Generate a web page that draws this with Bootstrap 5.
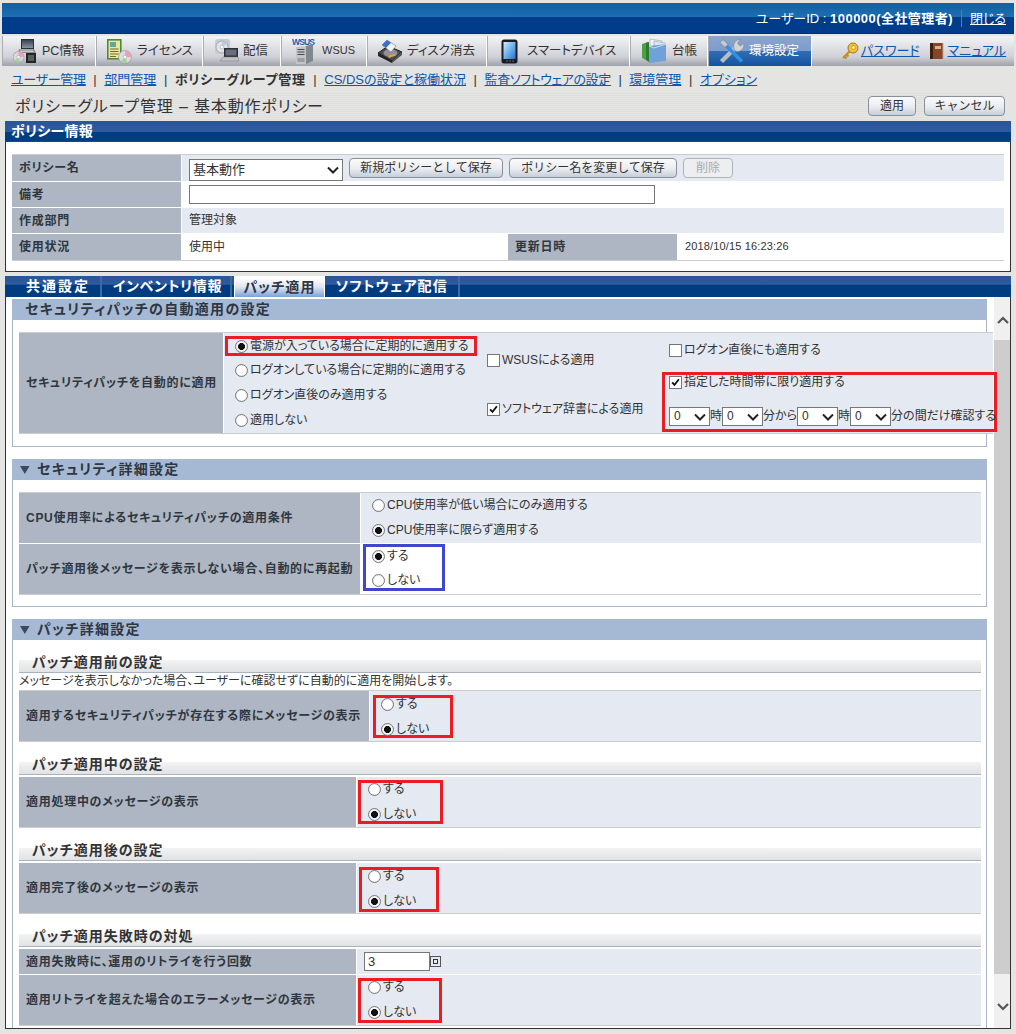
<!DOCTYPE html>
<html lang="ja">
<head>
<meta charset="utf-8">
<title>ポリシーグループ管理</title>
<link href="https://cdn.jsdelivr.net/npm/bootstrap@5.3.0/dist/css/bootstrap.min.css" rel="stylesheet">
<style>
html,body{margin:0;height:1034px;overflow:hidden}
body{width:1016px;background:#e4e4e2;color:#333;font-family:"Liberation Sans","Noto Sans CJK JP",sans-serif;font-size:12px;line-height:1.2;font-feature-settings:"palt"}
a{color:#0b57b0}
.top-bar{height:31px;margin:3px 2px 0;background:linear-gradient(#12609f 0,#1c6fb3 45%,#003c8a 46%,#003c8a 97%,#222 100%);color:#fff;font-size:13px;padding-right:8px}
.top-bar a{color:#fff}
.top-bar b{letter-spacing:.45px}
.top-sep{width:1px;height:17px;background:#4d7cb5;margin:0 8px}
.main-nav{height:30px;margin:2px 2px 0;background:linear-gradient(#f3f4f7 0,#dcdde2 45%,#cfd1d6 70%,#9da1aa 100%)}
.mtab{height:30px;border-right:1px solid #fff;border-left:1px solid #a9adb6;font-size:12.5px;color:#333;flex:none}
.mtab svg{flex:none}
.mtab.on{background:linear-gradient(#8aa5cf 0,#7d9ccb 50%,#2f6db4 51%,#14529f 100%);color:#fff}
.t1{width:94px;padding-left:10px;gap:5px}
.t2{width:107px;padding-left:10px;gap:5px}
.t3{width:78px;padding-left:11px;gap:4px}
.t4{width:86px;padding-left:10px;gap:6px}
.t4 span{font-size:11px}
.t5{width:120px;padding-left:10px;gap:5px}
.t6{width:143px;padding-left:13px;gap:9px}
.t7{width:78px;padding-left:11px;gap:5px}
.t8{width:104px;padding-left:9px;gap:4px}
.nav-links{font-size:13px;white-space:nowrap;padding-left:29px}
.nav-links svg{flex:none}
.lnk-a{margin-left:2px}
.ico-b{margin-left:9px}
.lnk-b{margin-left:4px}
.sub-nav{height:26px;padding:1px 0 0 11px;font-size:13px}
.sub-nav .pipe{margin:0 7.6px;color:#333}
.sub-nav b{letter-spacing:.75px}
.sub-nav .tight{letter-spacing:-.4px}
.sub-nav .tight-a{letter-spacing:-.3px}
.title-row{height:28px;margin:0 11px 0 15px;background:repeating-linear-gradient(#e6e6e4 0 1px,#dedede 1px 2px)}
.title-row h1{font-size:16px;font-weight:400;margin:2px 0 0;letter-spacing:.85px}
.old-btn{--bs-btn-padding-y:0;--bs-btn-padding-x:0;--bs-btn-font-size:12px;--bs-btn-border-radius:4px;--bs-btn-line-height:1;height:20px;border:1px solid #8a8f98;background:linear-gradient(#fbfbfc,#e9ecf0 55%,#c6ced9);color:#333;flex:none}
.old-btn:disabled{color:#aaa;background:#eceef1;border-color:#b0b3b8;opacity:1}
.wb48{width:48px}.wb81{width:81px}.wb154{width:154px;margin-left:6px}.wb168{width:168px;margin-left:6px}.wb50{width:50px;margin-left:6px}
.panel-head{height:21px;margin:1px 5px 0;background:linear-gradient(#2b5599 0,#2f5a9e 50%,#003d80 52%,#003d80 92%,#1a4f8f 100%);color:#fff;font-size:14px;font-weight:700;padding:2px 0 0 6px;letter-spacing:.3px}
.panel-box{height:130px;margin:0 5px;background:#fff;border:solid #333;border-width:0 1px 1px;padding:12px 6px 0 6px}
.frm-wrap{border-top:1px solid #ccc;border-bottom:1px solid #ccc}
.w992{width:992px}.w974{width:974px}.w962{width:962px}
.frm-row{display:flex;background:#e5e9f1;border-top:1px solid #fff;font-size:12px}
.frm-row:first-child{border-top:0}
.frm-row.blank{background:#fff}
.frm-lbl{flex:none;background:#adb6c2;font-weight:700;padding:1px 0 0 7px;display:flex;align-items:center;color:#2f3640;border-right:1px solid #fff;letter-spacing:.72px}
.frm-val{flex:1;display:flex;align-items:center;min-width:0;padding-left:7px}
.tall-25{height:25px}.tall-26{height:26px}.tall-27{height:27px}.tall-50{height:50px}.tall-51{height:51px}.tall-100{height:100px}
.w170{width:170px}.w169{width:169px;border-right:0}.w205{width:205px}.w342{width:342px}.w351{width:351px}.w338{width:338px}
.txt-in,.sel-in{border:1px solid #777;background:#fff;border-radius:0;padding:0 3px;font-size:12px;color:#333;height:19px}
.sel-in{appearance:none;-webkit-appearance:none;background:#fff url("data:image/svg+xml,%3Csvg xmlns='http://www.w3.org/2000/svg' viewBox='0 0 12 8'%3E%3Cpath d='M1 1.5l5 5 5-5' fill='none' stroke='%23222' stroke-width='2'/%3E%3C/svg%3E") no-repeat right 3px center/12px 8px}
.sel-name{width:154px;height:22px;margin-top:4px;font-size:13px}
.in-466{width:466px}
.in-66{width:66px;font-size:13px}
.tab-bar{height:21px;margin:4px 5px 0;background:linear-gradient(#2b5599 0,#2f5a9e 40%,#003d80 42%);color:#fff;font-size:14px;font-weight:700;letter-spacing:1.1px;padding-left:20px}
.stab{padding:0 10px 0 1px;height:100%;display:flex;align-items:center;border-right:2px solid #3a6aa8}
.stab.first{letter-spacing:2px}
.stab.inv{padding-left:11px;letter-spacing:.7px;padding-right:8px}
.stab.on{background:linear-gradient(#fff,#dfe7f2 45%,#7ca2d8);color:#2f3640;border:solid #fff;border-width:2px 1px 0;margin:0 2px;padding:0 8px}
.stab.sw{padding-left:9px}
.scroll-area{height:732px;margin:0 5px;background:#fff;border:solid #333;border-width:0 1px 1px;display:flex;overflow:hidden}
.pane{width:988px;flex:none;padding-top:2px;padding-left:6px;position:relative;z-index:1}
.scr{width:17px;flex:none;background:#f0f0f0;display:flex;flex-direction:column;align-items:center}
.scr-thumb{height:634px;width:100%;background:#cdcdcd;margin-left:-1px}
.arrow-up{height:43px;padding-top:15px}
.arrow-dn{height:54px;padding-top:25px}
.sec-bar{height:21px;width:975px;background:#a5b9d5;font-size:14px;font-weight:700;color:#2f3640;letter-spacing:1.3px;display:flex;align-items:center;padding-left:13px}
.sec-bar svg{margin:0 7px 0 -5px}
.sec-body{width:975px;border:solid #a9b5c9;border-width:0 1px 1px;padding:12px 5px 12px 6px;margin-bottom:12px}
.sec-b2{padding-bottom:11px}
.sec-b3{padding-bottom:0;margin-bottom:0;height:395px}
.opt{height:25px;display:flex;align-items:center;gap:2px}
.rdo,.chk{appearance:none;-webkit-appearance:none;margin:0;width:13px;height:13px;flex:none;background:#fff}
.rdo{border:1px solid #777;border-radius:50%;box-shadow:inset 0 0 0 1px #eee}
.rdo:checked{background:radial-gradient(circle,#111 0 3.2px,#fff 3.8px)}
.chk{border:1px solid #777}
.chk:checked{background:#fff url("data:image/svg+xml,%3Csvg xmlns='http://www.w3.org/2000/svg' viewBox='0 0 12 12'%3E%3Cpath d='M2.3 5.8l2.6 2.7 4.8-6' fill='none' stroke='%23111' stroke-width='2'/%3E%3C/svg%3E") no-repeat center/11px}
.anno-r,.anno-b{border:3px solid #ed1c24;flex:none}
.anno-b{border-color:#3f48cc;width:82px;height:47px;margin-left:2px;padding-left:6px}
.anno-main{height:20px;width:252px;margin:2px 0 2px 1px;padding-left:7px}
.anno-time{width:335px;height:60px;margin-top:14px;padding-left:4px}
.opt-18{height:18px}
.opt-25b{margin-top:3px}
.ra1{width:80px;height:43px;margin:4px 0 0 3px;padding-left:5px}
.ra2{width:85px;height:44px;margin:3px 0 0 1px;padding-left:7px}
.ra3{width:80px;height:45px;margin:4px 0 0 2px;padding-left:6px}
.ra4{width:84px;height:45px;margin:3px 0 0 1px;padding-left:7px}
.mini-opt{height:13px}
.mini-opt + .mini-opt{margin-top:12px}
.c1{width:263px;padding-top:1px}
.c2{width:182px;padding-top:20px}
.c3{width:325px;margin-left:-7px}
.chk-row{height:15px}
.chk-gap{margin-top:34px}
.chk-top{margin:10px 0 0 7px}
.opt-pad{padding-left:11px}
.sub-h{height:21px;font-size:14px;font-weight:700;letter-spacing:1px;padding:2px 0 0 13px;background:linear-gradient(#f3f3f3,#e0e2e5) left bottom/100% 12px no-repeat;border-bottom:1px solid #a9b3c0;color:#333}
.sub-gap{margin-top:12px}
.note-line{height:18px;display:flex;align-items:center;font-size:12px;border-bottom:1px solid #ccc}
.gap2{margin-top:2px}
.line-b{border-bottom:1px solid #ccc}
.stamp{font-size:11px;letter-spacing:.15px;padding-left:8px;width:327px}
.mini-box{display:inline-flex;align-items:center;justify-content:center;width:11px;height:11px;border:1px solid #555;line-height:1}
.mini-box::before{content:"";width:5px;height:5px;border:1px solid #333}
.times{gap:0;white-space:nowrap;height:19px;margin-top:17px}
.times .sel-in{width:41px;padding-left:4px;flex:none}
</style>
</head>
<body>
<div class="top-bar d-flex align-items-center justify-content-end">
  <span>ユーザーID : <b>100000(全社管理者)</b></span><span class="top-sep"></span><a href="#">閉じる</a>
</div>

<div class="main-nav d-flex align-items-center">
  <div class="mtab t1 d-flex align-items-center">
    <svg width="24" height="24" viewBox="0 0 24 24"><defs><linearGradient id="sc" x1="0" y1="0" x2="0" y2="1"><stop offset="0" stop-color="#3a4250"/><stop offset="1" stop-color="#8a93a3"/></linearGradient></defs><path d="M8 0h13v10H8z" fill="#2b2f38"/><path d="M9 1h11v8H9z" fill="url(#sc)"/><path d="M6 10h15l2 4H5z" fill="#8b8d92"/><path d="M7 11h13M6.500 12.500h14" stroke="#c7c9cc"/><circle cx="5.500" cy="18" r="5.500" fill="#d9d9dc" stroke="#8f8f95" stroke-width=".6"/><path d="M5.500 12.500a5.500 5.500 0 0 1 5.500 5.500h-5.500z" fill="#e9a1b6"/><path d="M5.500 18l-4 4a5.500 5.500 0 0 0 6 1z" fill="#a4d2a0"/><circle cx="5.500" cy="18" r="1.600" fill="#fff" stroke="#999" stroke-width=".5"/><rect x="13" y="14" width="10" height="10" fill="#23252a"/><rect x="15" y="16" width="6" height="6" fill="#596058"/></svg>
    <span>PC情報</span></div>
  <div class="mtab t2 d-flex align-items-center">
    <svg width="25" height="25" viewBox="0 0 25 25"><rect x=".8" y=".8" width="13" height="19" fill="#eee79a" stroke="#4a8a3a" stroke-width="1.6"/><rect x="3" y="3" width="6" height="5" fill="#5fa7a0"/><path d="M3 10h8.500M3 12.500h8.500M3 15h8.500M3 17.500h6" stroke="#6b6c3a"/><circle cx="18" cy="18" r="6.500" fill="#dcdce0" stroke="#8f8f95" stroke-width=".6"/><path d="M18 11.500a6.500 6.500 0 0 1 6.500 6.500H18z" fill="#e9a1b6"/><path d="M18 18l-4.500 4.700a6.500 6.500 0 0 0 7 .8z" fill="#a4d2a0"/><circle cx="18" cy="18" r="1.800" fill="#fff" stroke="#999" stroke-width=".5"/></svg>
    <span>ライセンス</span></div>
  <div class="mtab t3 d-flex align-items-center">
    <svg width="24" height="24" viewBox="0 0 24 24"><rect x="0" y="0" width="15" height="15" rx="3" fill="#c9cbd2"/><circle cx="7" cy="8" r="6" fill="#e2e2e8" stroke="#8f8f95" stroke-width=".6"/><path d="M7 2a6 6 0 0 1 5 3L7 8z" fill="#b6cfe2"/><circle cx="7" cy="8" r="1.800" fill="#fff" stroke="#999" stroke-width=".5"/><path d="M9 9h14v9H9z" fill="#2c2f36"/><path d="M10.500 10.500h11v6h-11z" fill="#686f7e"/><path d="M8 18h15l1 4H5z" fill="#bfc1c5" stroke="#777" stroke-width=".5"/></svg>
    <span>配信</span></div>
  <div class="mtab t4 d-flex align-items-center">
    <svg width="24" height="28" viewBox="0 0 24 28"><text x="0" y="7.500" font-size="8.500" font-weight="700" fill="#1f5fb0" font-family="Liberation Sans" textLength="23">WSUS</text><path d="M4 10l10-1v18H4z" fill="#c4c5c8"/><path d="M14 9l7-2v17l-7 3z" fill="#82868d"/><path d="M5.500 12.500h7M5.500 15h7M5.500 17.500h7" stroke="#46484d" stroke-width="1.200"/><path d="M5.500 21h7v4h-7z" fill="#9a9ca0"/></svg>
    <span>WSUS</span></div>
  <div class="mtab t5 d-flex align-items-center">
    <svg width="24" height="24" viewBox="0 0 24 24"><path d="M0 14L10 7l14 6-10 9z" fill="#4a4c50" stroke="#1a1a1a"/><path d="M0 14v3l14 7v-2z" fill="#222"/><path d="M14 24l10-8v-3l-10 9z" fill="#55565a"/><ellipse cx="12.500" cy="14" rx="7" ry="3.800" fill="#8f9196"/><path d="M4 6l5-5 9 6-5 6z" fill="#f2f2f2" stroke="#7a7a7a" stroke-width=".6"/><path d="M4 6l5-5 4 2.700-5 5.200z" fill="#3a6fc8"/><path d="M10 17l6-2 2 1-7 3z" fill="#e9a63a"/></svg>
    <span>ディスク消去</span></div>
  <div class="mtab t6 d-flex align-items-center">
    <svg width="17" height="25" viewBox="0 0 17 25"><defs><linearGradient id="tb" x1="0" y1="0" x2="1" y2="1"><stop offset="0" stop-color="#d5ecfb"/><stop offset=".5" stop-color="#6fb2ee"/><stop offset="1" stop-color="#2a6fca"/></linearGradient></defs><rect x=".5" y=".5" width="16" height="24" rx="2.500" fill="#1c1d20"/><rect x="2.500" y="3" width="12" height="17" fill="url(#tb)"/><path d="M5 22h2M8 22h2M11 22h2" stroke="#666"/></svg>
    <span>スマートデバイス</span></div>
  <div class="mtab t7 d-flex align-items-center">
    <svg width="25" height="26" viewBox="0 0 25 26"><path d="M0 6l6-2v19l-6-3z" fill="#4f9e45"/><path d="M4 5l3-1v20l-3-2z" fill="#2f7a2f"/><path d="M8 1l12 2v10H8z" fill="#f1f3f4" stroke="#98a2ad" stroke-width=".6"/><path d="M12 3l11 2v8H12z" fill="#dfe6ec" stroke="#98a2ad" stroke-width=".6"/><path d="M7 8l17-2v17L7 25z" fill="#6ea2d9"/><path d="M7 8l5 2 12-4" fill="none" stroke="#c9dcf0"/></svg>
    <span>台帳</span></div>
  <div class="mtab on t8 d-flex align-items-center">
    <svg width="27" height="27" viewBox="0 0 27 27"><path d="M3.500 23.500L19 8" stroke="#b9bcc2" stroke-width="4.500"/><path d="M16 10a6.500 6.500 0 0 1 6.500-8.500l-3 3.500 2.500 3 3.800-2.500A6.500 6.500 0 0 1 17 13z" fill="#d2d4d8" stroke="#7c8088" stroke-width=".6"/><path d="M7 6.500l17 17" stroke="#2f8ee8" stroke-width="3.500"/><path d="M2 4.500L5 1.500l5 5-3 3z" fill="#c9cbd0" stroke="#70747c" stroke-width=".6"/></svg>
    <span>環境設定</span></div>
  <div class="nav-links d-flex align-items-center flex-grow-1">
    <svg width="18" height="18" viewBox="0 0 18 18"><circle cx="12" cy="6" r="5" fill="#efc23f" stroke="#a67a10"/><circle cx="12.500" cy="5.500" r="1.800" fill="#fff5c8" stroke="#a67a10" stroke-width=".6"/><path d="M8.500 9.500L2 16M3.500 14.500l2 2M5.500 12.500l2 2" stroke="#c0901e" stroke-width="2.200"/></svg>
    <a href="#" class="lnk-a">パスワード</a>
    <svg class="ico-b" width="15" height="16" viewBox="0 0 15 16"><rect x="1" width="13" height="16" fill="#85452a"/><rect x="1" width="3" height="16" fill="#3d1f10"/><rect x="6" y="3" width="6" height="3" fill="#d6b58a"/><path d="M14 0v16" stroke="#c9a58a"/></svg>
    <a href="#" class="lnk-b">マニュアル</a>
  </div>
</div>

<div class="sub-nav d-flex align-items-center">
  <a href="#" class="tight-a">ユーザー管理</a><span class="pipe">|</span><a href="#">部門管理</a><span class="pipe">|</span><b>ポリシーグループ管理</b><span class="pipe">|</span><a href="#">CS/DSの設定と稼働状況</a><span class="pipe">|</span><a href="#" class="tight">監査ソフトウェアの設定</a><span class="pipe">|</span><a href="#">環境管理</a><span class="pipe">|</span><a href="#">オプション</a>
</div>

<div class="title-row d-flex align-items-center">
  <h1>ポリシーグループ管理 – 基本動作ポリシー</h1>
  <div class="d-flex ms-auto gap-2">
    <button class="btn old-btn wb48">適用</button>
    <button class="btn old-btn wb81">キャンセル</button>
  </div>
</div>

<div class="panel-head">ポリシー情報</div>
<div class="panel-box">
  <div class="frm-wrap w992">
    <div class="frm-row tall-26">
      <div class="frm-lbl w170">ポリシー名</div>
      <div class="frm-val">
        <select class="sel-in sel-name"><option>基本動作</option></select>
        <button class="btn old-btn wb154">新規ポリシーとして保存</button>
        <button class="btn old-btn wb168">ポリシー名を変更して保存</button>
        <button class="btn old-btn wb50" disabled>削除</button>
      </div>
    </div>
    <div class="frm-row blank tall-26">
      <div class="frm-lbl w170">備考</div>
      <div class="frm-val"><input type="text" class="txt-in in-466"></div>
    </div>
    <div class="frm-row tall-26">
      <div class="frm-lbl w170">作成部門</div>
      <div class="frm-val">管理対象</div>
    </div>
    <div class="frm-row blank tall-27">
      <div class="frm-lbl w170">使用状況</div>
      <div class="frm-val">使用中</div>
      <div class="frm-lbl w169">更新日時</div>
      <div class="stamp d-flex align-items-center">2018/10/15 16:23:26</div>
    </div>
  </div>
</div>

<div class="tab-bar d-flex align-items-end">
  <span class="stab first">共通設定</span><span class="stab inv">インベントリ情報</span><span class="stab on">パッチ適用</span><span class="stab sw">ソフトウェア配信</span>
</div>

<div class="scroll-area">
  <div class="pane">
    <div class="sec-bar">セキュリティパッチの自動適用の設定</div>
    <div class="sec-body">
      <div class="frm-wrap w974">
        <div class="frm-row tall-100">
          <div class="frm-lbl w205">セキュリティパッチを自動的に適用</div>
          <div class="c1">
            <div class="anno-r anno-main opt"><input class="rdo" type="radio" name="a1" checked><span>電源が入っている場合に定期的に適用する</span></div>
            <div class="opt opt-pad"><input class="rdo" type="radio" name="a1"><span>ログオンしている場合に定期的に適用する</span></div>
            <div class="opt opt-pad"><input class="rdo" type="radio" name="a1"><span>ログオン直後のみ適用する</span></div>
            <div class="opt opt-pad"><input class="rdo" type="radio" name="a1"><span>適用しない</span></div>
          </div>
          <div class="c2 d-flex flex-column">
            <div class="opt chk-row"><input class="chk" type="checkbox"><span>WSUSによる適用</span></div>
            <div class="opt chk-row chk-gap"><input class="chk" type="checkbox" checked><span>ソフトウェア辞書による適用</span></div>
          </div>
          <div class="c3">
            <div class="opt chk-row chk-top"><input class="chk" type="checkbox"><span>ログオン直後にも適用する</span></div>
            <div class="anno-r anno-time">
              <div class="opt chk-row"><input class="chk" type="checkbox" checked><span>指定した時間帯に限り適用する</span></div>
              <div class="opt times">
                <select class="sel-in"><option>0</option></select><span>時</span>
                <select class="sel-in"><option>0</option></select><span>分から</span>
                <select class="sel-in"><option>0</option></select><span>時</span>
                <select class="sel-in"><option>0</option></select><span>分の間だけ確認する</span>
              </div>
            </div>
          </div>
        </div>
      </div>
    </div>

    <div class="sec-bar"><svg width="10" height="8" viewBox="0 0 10 8"><path d="M0 0h9.500L4.800 8z" fill="#3d4a5c"/></svg>セキュリティ詳細設定</div>
    <div class="sec-body sec-b2">
      <div class="frm-wrap w962">
        <div class="frm-row tall-50">
          <div class="frm-lbl w342">CPU使用率によるセキュリティパッチの適用条件</div>
          <div class="opt-pad">
            <div class="opt"><input class="rdo" type="radio" name="a2"><span>CPU使用率が低い場合にのみ適用する</span></div>
            <div class="opt"><input class="rdo" type="radio" name="a2" checked><span>CPU使用率に限らず適用する</span></div>
          </div>
        </div>
        <div class="frm-row blank tall-51">
          <div class="frm-lbl w342">パッチ適用後メッセージを表示しない場合、自動的に再起動</div>
          <div class="anno-b">
            <div class="opt opt-18"><input class="rdo" type="radio" name="a3" checked><span>する</span></div>
            <div class="opt opt-25b"><input class="rdo" type="radio" name="a3"><span>しない</span></div>
          </div>
        </div>
      </div>
    </div>

    <div class="sec-bar"><svg width="10" height="8" viewBox="0 0 10 8"><path d="M0 0h9.500L4.800 8z" fill="#3d4a5c"/></svg>パッチ詳細設定</div>
    <div class="sec-body sec-b3">
      <div class="w962">
        <div class="sub-h">パッチ適用前の設定</div>
        <div class="note-line">メッセージを表示しなかった場合、ユーザーに確認せずに自動的に適用を開始します。</div>
        <div class="line-b">
          <div class="frm-row tall-50">
            <div class="frm-lbl w351">適用するセキュリティパッチが存在する際にメッセージの表示</div>
            <div class="anno-r ra1">
              <div class="opt mini-opt"><input class="rdo" type="radio" name="a4"><span>する</span></div>
              <div class="opt mini-opt"><input class="rdo" type="radio" name="a4" checked><span>しない</span></div>
            </div>
          </div>
        </div>

        <div class="sub-h sub-gap">パッチ適用中の設定</div>
        <div class="gap2 line-b">
          <div class="frm-row tall-50">
            <div class="frm-lbl w338">適用処理中のメッセージの表示</div>
            <div class="anno-r ra2">
              <div class="opt mini-opt"><input class="rdo" type="radio" name="a5"><span>する</span></div>
              <div class="opt mini-opt"><input class="rdo" type="radio" name="a5" checked><span>しない</span></div>
            </div>
          </div>
        </div>

        <div class="sub-h sub-gap">パッチ適用後の設定</div>
        <div class="gap2 line-b">
          <div class="frm-row tall-50">
            <div class="frm-lbl w338">適用完了後のメッセージの表示</div>
            <div class="anno-r ra3">
              <div class="opt mini-opt"><input class="rdo" type="radio" name="a6"><span>する</span></div>
              <div class="opt mini-opt"><input class="rdo" type="radio" name="a6" checked><span>しない</span></div>
            </div>
          </div>
        </div>

        <div class="sub-h sub-gap">パッチ適用失敗時の対処</div>
        <div class="gap2 line-b">
          <div class="frm-row tall-25">
            <div class="frm-lbl w338">適用失敗時に、運用のリトライを行う回数</div>
            <div class="frm-val"><input type="text" class="txt-in in-66" value="3"><span class="mini-box"></span></div>
          </div>
          <div class="frm-row tall-51">
            <div class="frm-lbl w338">適用リトライを超えた場合のエラーメッセージの表示</div>
            <div class="anno-r ra4">
              <div class="opt mini-opt"><input class="rdo" type="radio" name="a7"><span>する</span></div>
              <div class="opt mini-opt"><input class="rdo" type="radio" name="a7" checked><span>しない</span></div>
            </div>
          </div>
        </div>
      </div>
    </div>
  </div>
  <div class="scr">
    <div class="arrow-up"><svg width="12" height="8" viewBox="0 0 12 8"><path d="M1 7l5-5 5 5" fill="none" stroke="#555" stroke-width="2.200"/></svg></div>
    <div class="scr-thumb"></div>
    <div class="arrow-dn"><svg width="12" height="8" viewBox="0 0 12 8"><path d="M1 1l5 5 5-5" fill="none" stroke="#555" stroke-width="2.200"/></svg></div>
  </div>
</div>
<script src="https://cdn.jsdelivr.net/npm/bootstrap@5.3.0/dist/js/bootstrap.bundle.min.js"></script>
</body>
</html>
